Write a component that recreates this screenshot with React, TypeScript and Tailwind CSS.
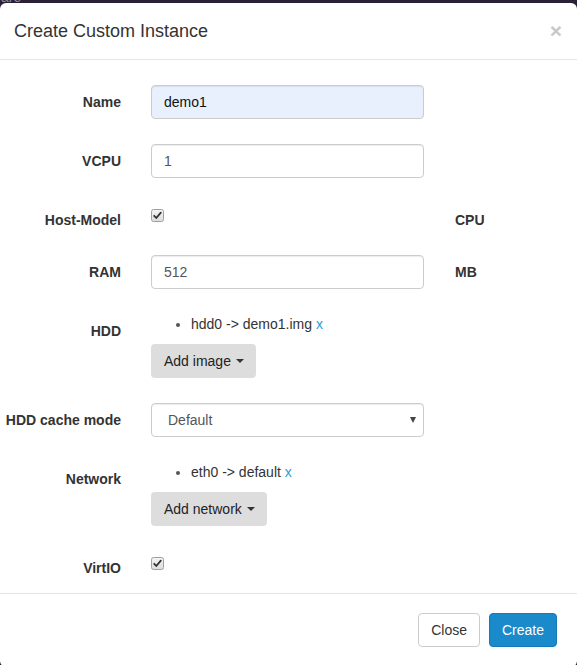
import React from 'react'

const font = { fontFamily: '"Liberation Sans", Arial, sans-serif' }

function Label({ children }: { children: React.ReactNode }) {
  return (
    <div className="w-[121px] shrink-0 pt-[7px] text-right text-[14px] leading-5 font-bold text-[#333]">
      {children}
    </div>
  )
}

function Unit({ children }: { children?: React.ReactNode }) {
  return <div className="ml-[31px] pt-[7px] text-[14px] leading-5 font-bold text-[#333]">{children}</div>
}

function TextInput({ value, autofill }: { value: string; autofill?: boolean }) {
  return (
    <div
      className={`flex h-[34px] w-[273px] items-center rounded-[4px] border border-[#ccc] px-[12px] text-[14px] shadow-[inset_0_1px_1px_rgba(0,0,0,0.075)] ${
        autofill ? 'bg-[#e8f0fe] text-[#111]' : 'bg-white text-[#555]'
      }`}
    >
      {value}
    </div>
  )
}

function Check() {
  return (
    <div className="mt-[6px] h-[13px] w-[13px]">
      <svg width="13" height="13" viewBox="0 0 13 13">
        <defs>
          <linearGradient id="cb" x1="0" y1="0" x2="0" y2="1">
            <stop offset="0" stopColor="#f4f4f4" />
            <stop offset="1" stopColor="#dcdcdc" />
          </linearGradient>
        </defs>
        <rect x="0.5" y="0.5" width="12" height="12" rx="2" fill="url(#cb)" stroke="#a0a0a0" />
        <path d="M3.2 6.8 L5.3 9 L9.8 3.6" fill="none" stroke="#333" strokeWidth="1.8" strokeLinecap="round" strokeLinejoin="round" />
      </svg>
    </div>
  )
}

function Caret() {
  return (
    <span className="ml-[5px] inline-block h-0 w-0 border-x-[4px] border-t-[4px] border-x-transparent border-t-[#333] align-middle" />
  )
}

function DropButton({ label }: { label: string }) {
  return (
    <div className="mt-[10px] inline-flex h-[34px] items-center self-start rounded-[4px] bg-[#ddd] pl-[13px] pr-[12px] text-[14px] text-[#222]">
      {label}
      <Caret />
    </div>
  )
}

function ItemList({ text }: { text: string }) {
  return (
    <ul className="list-disc pl-[40px] text-[14px] leading-5 text-[#333] marker:text-[#555]">
      <li>
        {text} <span className="text-[#2a9fd6]">x</span>
      </li>
    </ul>
  )
}

export default function App() {
  return (
    <div className="w-[577px] h-[665px] overflow-hidden bg-[#2a2136]" style={font}>
      {/* backdrop strip */}
      <div className="h-[3px] overflow-hidden">
        <div className="-mt-[13px] pl-[1px] text-[14px] leading-5 text-[#8c8a99]">are</div>
      </div>

      <div className="rounded-[6px] bg-white">
        {/* header */}
        <div className="flex items-start justify-between border-b border-[#e5e5e5] px-[15px] py-[15px]">
          <h4 className="text-[18px] leading-[26px] text-[#333] -ml-[1px]">Create Custom Instance</h4>
          <span className="text-[21px] leading-[21px] font-bold text-[#c8c8c8] mt-[2px]">×</span>
        </div>

        {/* body */}
        <div className="flex flex-col gap-[25px] pt-[25px] pb-[15px]">
          <div className="flex">
            <Label>Name</Label>
            <div className="ml-[30px]">
              <TextInput value="demo1" autofill />
            </div>
          </div>

          <div className="flex">
            <Label>VCPU</Label>
            <div className="ml-[30px]">
              <TextInput value="1" />
            </div>
          </div>

          <div className="flex h-[27px]">
            <Label>Host-Model</Label>
            <div className="ml-[30px] w-[273px]">
              <Check />
            </div>
            <Unit>CPU</Unit>
          </div>

          <div className="flex">
            <Label>RAM</Label>
            <div className="ml-[30px]">
              <TextInput value="512" />
            </div>
            <Unit>MB</Unit>
          </div>

          <div className="flex">
            <Label>HDD</Label>
            <div className="ml-[30px] flex w-[273px] flex-col">
              <ItemList text="hdd0 -> demo1.img" />
              <DropButton label="Add image" />
            </div>
          </div>

          <div className="flex">
            <Label>HDD cache mode</Label>
            <div className="ml-[30px]">
              <div className="flex h-[34px] w-[273px] items-center justify-between rounded-[4px] border border-[#ccc] bg-white pl-[16px] pr-[7px] text-[14px] text-[#555] shadow-[inset_0_1px_1px_rgba(0,0,0,0.075)]">
                <span>Default</span>
                <span className="inline-block h-0 w-0 border-x-[3.5px] border-t-[6px] border-x-transparent border-t-[#444]" />
              </div>
            </div>
          </div>

          <div className="flex">
            <Label>Network</Label>
            <div className="ml-[30px] flex w-[273px] flex-col">
              <ItemList text="eth0 -> default" />
              <DropButton label="Add network" />
            </div>
          </div>

          <div className="flex h-[27px]">
            <Label>VirtIO</Label>
            <div className="ml-[30px]">
              <Check />
            </div>
          </div>
        </div>

        {/* footer */}
        <div className="flex justify-end gap-[9px] border-t border-[#e5e5e5] pt-[19px] pb-[20px] pr-[20px]">
          <div className="flex h-[34px] items-center rounded-[4px] border border-[#ccc] bg-white px-[12px] text-[14px] text-[#333]">
            Close
          </div>
          <div className="flex h-[34px] items-center rounded-[4px] border border-[#1479b8] bg-[#1a8acb] px-[12px] text-[14px] text-white">
            Create
          </div>
        </div>
      </div>
    </div>
  )
}
